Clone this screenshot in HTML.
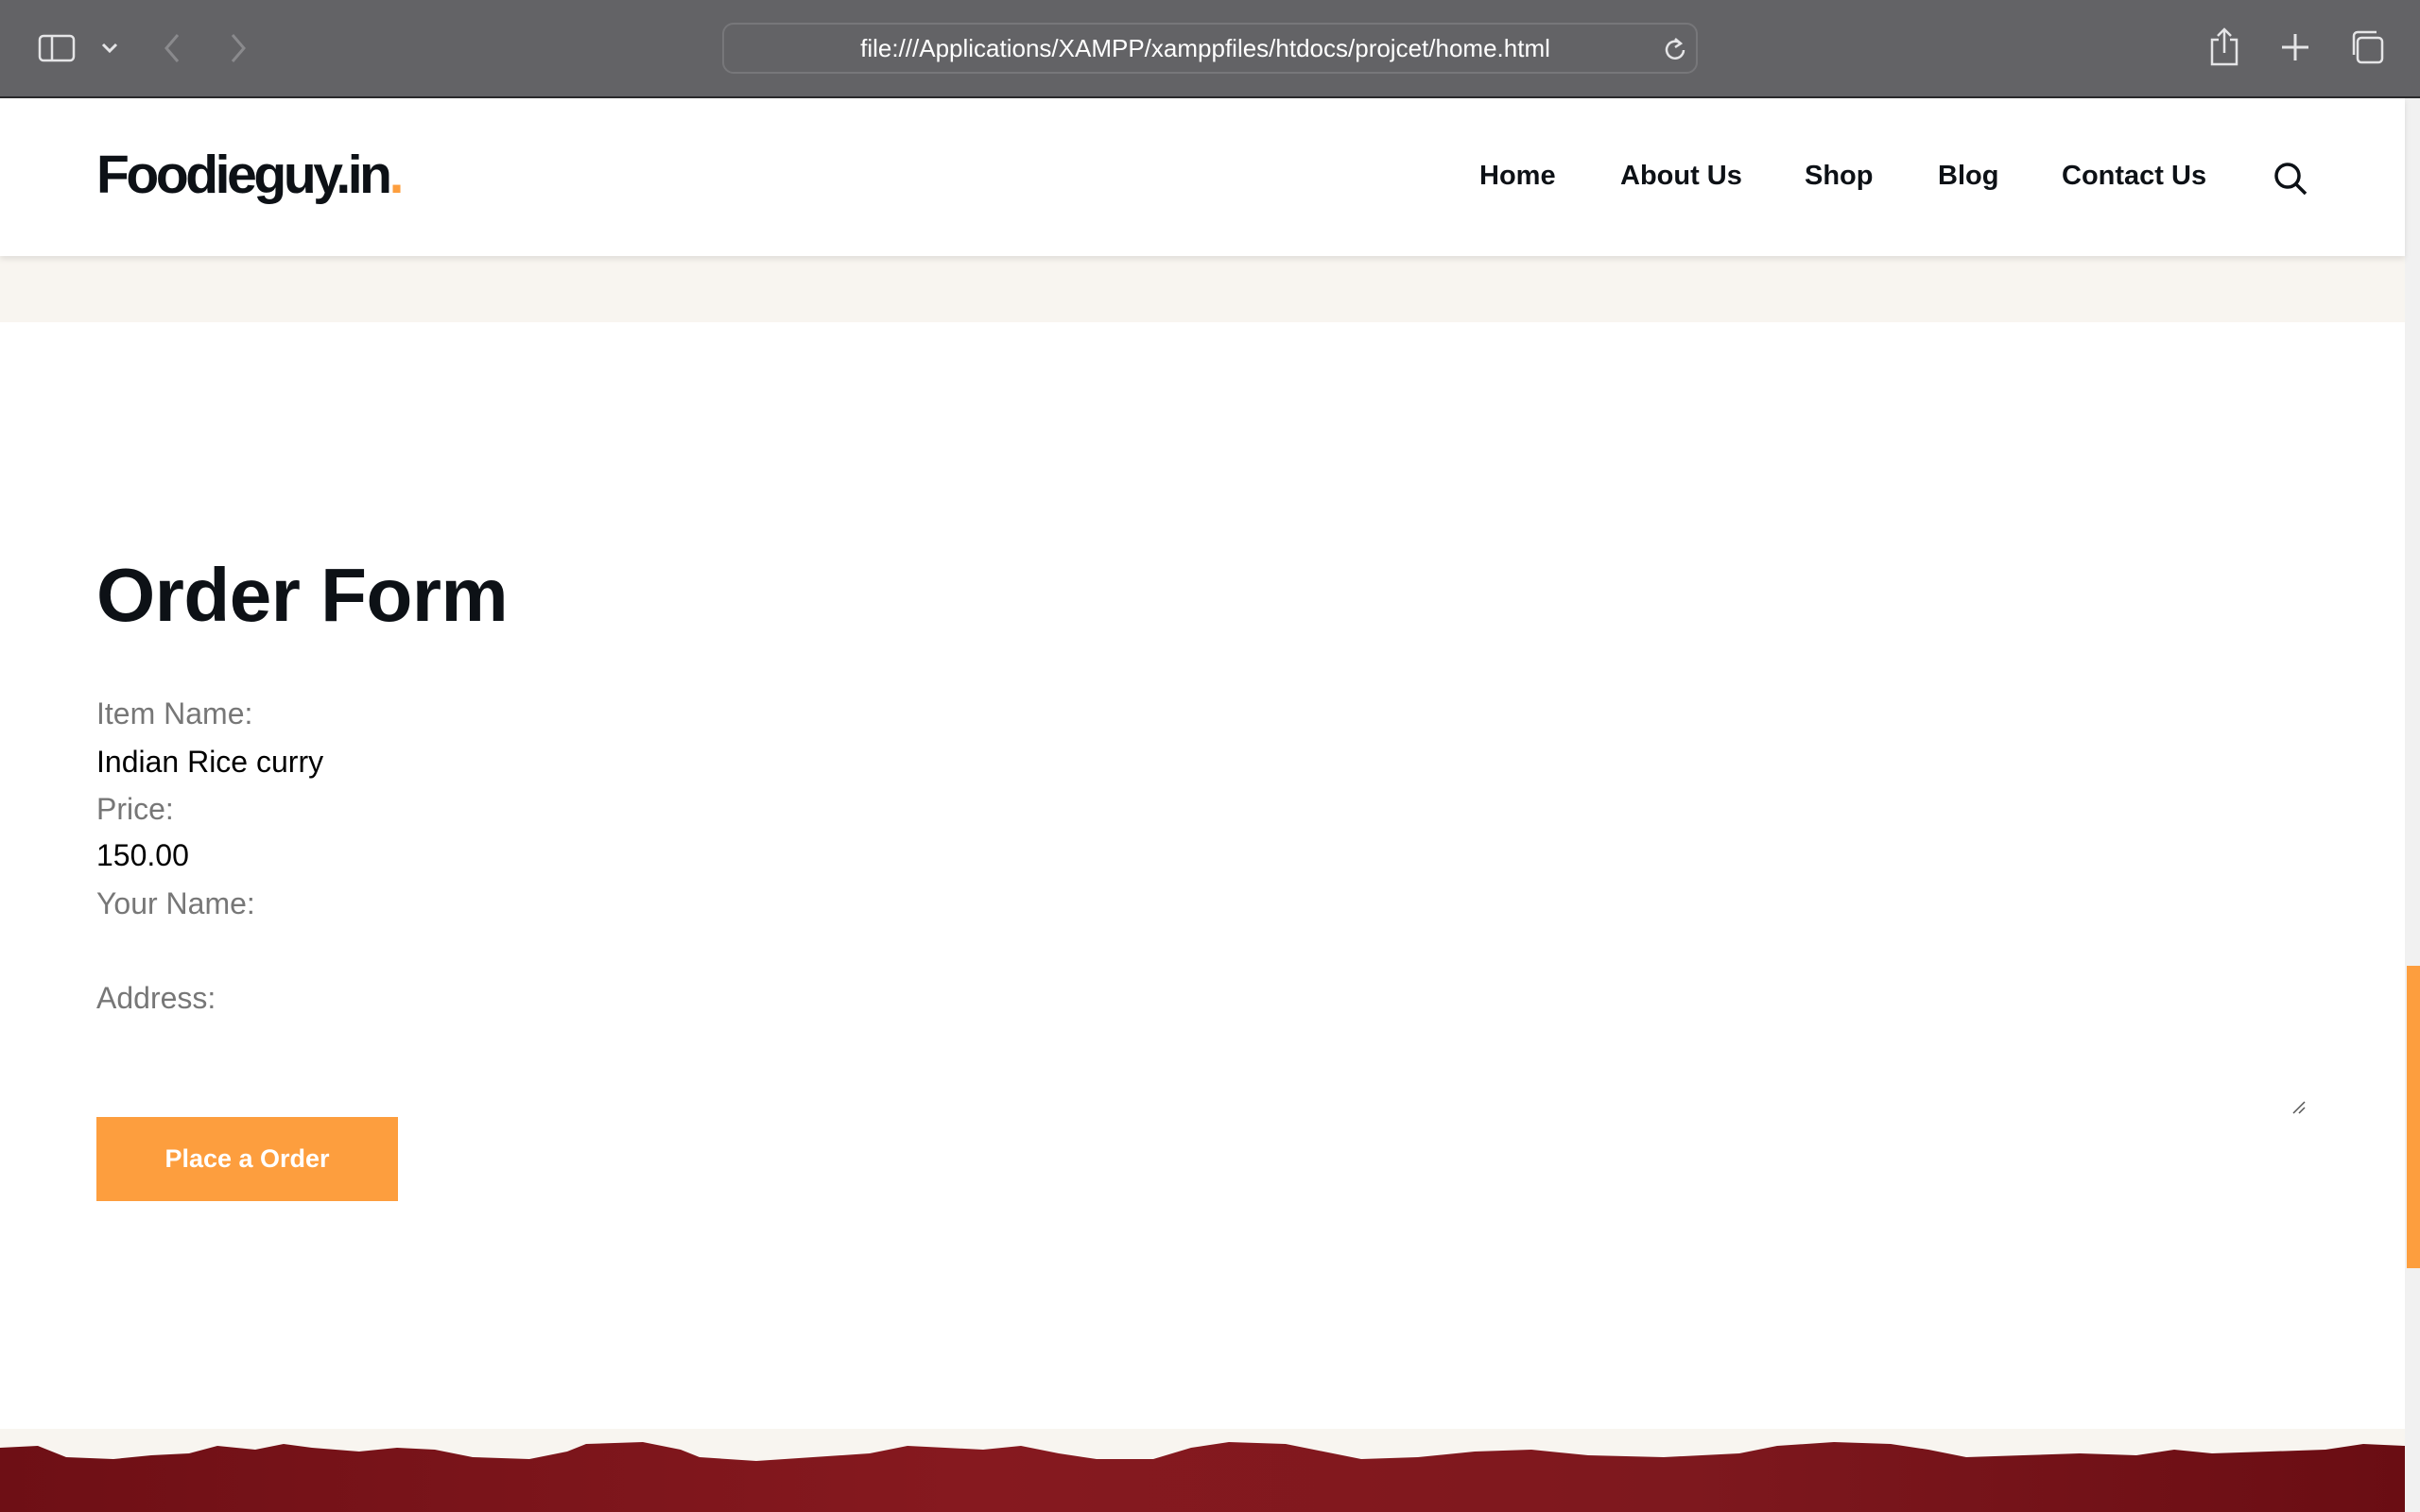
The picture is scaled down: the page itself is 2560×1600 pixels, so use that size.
<!DOCTYPE html>
<html><head><meta charset="utf-8"><style>
*{margin:0;padding:0;box-sizing:border-box}
html,body{width:2560px;height:1600px;overflow:hidden;background:#fff;font-family:"Liberation Sans",sans-serif}
.bar{position:absolute;left:0;top:0;width:2560px;height:104px;background:#636366;border-bottom:2px solid #2a2a2c}
.url{position:absolute;left:764px;top:24px;width:1032px;height:54px;border:2px solid #77777a;border-radius:12px;color:#fff;font-size:26px;line-height:50px;text-align:center;padding-right:50px;padding-left:40px}
.nav{position:absolute;left:0;top:104px;width:2544px;height:167px;background:#fff;box-shadow:0 3px 6px rgba(0,0,0,.1);z-index:2}
.logo{position:absolute;left:102px;top:48px;font-size:57px;font-weight:bold;letter-spacing:-3.4px;color:#0d1116}
.logo span{color:#fd9e3e}
.menu a{position:absolute;top:66px;font-size:29px;font-weight:bold;color:#0d1116;text-decoration:none}
.band{position:absolute;left:0;top:271px;width:2544px;height:70px;background:#f8f5f0}
.sb{position:absolute;right:0;top:104px;width:16px;height:1496px;background:#f1f1f1}
.thumb{position:absolute;right:0;top:1022px;width:14px;height:320px;background:#fd9e3e}
h1{position:absolute;left:102px;top:584px;font-size:80px;font-weight:bold;color:#0d1116;letter-spacing:-0.5px}
.f{position:absolute;left:102px;font-size:32px}
.l{color:#777}
.v{color:#000}
.btn{position:absolute;left:102px;top:1182px;width:319px;height:89px;background:#fd9e3e;color:#fff;font-weight:bold;font-size:27px;text-align:center;line-height:89px}
.foot{position:absolute;left:0;top:1512px;width:2544px;height:88px;background:#f8f5f0}
</style></head><body>
<div class="bar">
<svg style="position:absolute;left:40px;top:36px" width="40" height="30" viewBox="0 0 40 30" fill="none" stroke="#e5e5e7" stroke-width="2.5"><rect x="2" y="2" width="36" height="26" rx="4"/><line x1="15" y1="2" x2="15" y2="28"/></svg>
<svg style="position:absolute;left:106px;top:44px" width="20" height="14" viewBox="0 0 20 14" fill="none" stroke="#e5e5e7" stroke-width="3"><path d="M3 3l7 7 7-7"/></svg>
<svg style="position:absolute;left:172px;top:34px" width="20" height="34" viewBox="0 0 20 34" fill="none" stroke="#8a8a8d" stroke-width="3"><path d="M16 3L4 17l12 14"/></svg>
<svg style="position:absolute;left:242px;top:34px" width="20" height="34" viewBox="0 0 20 34" fill="none" stroke="#8a8a8d" stroke-width="3"><path d="M4 3l12 14L4 31"/></svg>
<div class="url">file:///Applications/XAMPP/xamppfiles/htdocs/projcet/home.html</div>
<svg style="position:absolute;left:1758px;top:38px" width="26" height="28" viewBox="0 0 26 28" fill="none" stroke="#e5e5e7" stroke-width="2.5"><path d="M20 8a9 9 0 1 0 3 7"/><path d="M14 3l6 5-6 4"/></svg>
<svg style="position:absolute;left:2336px;top:28px" width="34" height="42" viewBox="0 0 34 42" fill="none" stroke="#e5e5e7" stroke-width="2.5"><path d="M11 14H4v26h26V14h-7"/><path d="M17 28V3M10 10l7-7 7 7"/></svg>
<svg style="position:absolute;left:2412px;top:34px" width="32" height="32" viewBox="0 0 32 32" stroke="#e5e5e7" stroke-width="3"><path d="M16 2v28M2 16h28"/></svg>
<svg style="position:absolute;left:2484px;top:30px" width="40" height="40" viewBox="0 0 40 40" fill="none" stroke="#e5e5e7" stroke-width="2.5"><rect x="10" y="10" width="26" height="26" rx="4"/><path d="M6 28V8a4 4 0 0 1 4-4h20"/></svg>
</div>
<div class="nav">
<div class="logo">Foodieguy.in<span>.</span></div>
<div class="menu">
<a style="left:1565px">Home</a><a style="left:1714px">About Us</a><a style="left:1909px">Shop</a><a style="left:2050px">Blog</a><a style="left:2181px">Contact Us</a>
</div>
<svg style="position:absolute;left:2404px;top:66px" width="38" height="38" viewBox="0 0 38 38" fill="none" stroke="#0d1116" stroke-width="3.5"><circle cx="16" cy="16" r="12"/><path d="M25 25l10 10"/></svg>
</div>
<div class="band"></div>
<h1>Order Form</h1>
<div class="f l" style="top:737px">Item Name:</div>
<div class="f v" style="top:788px">Indian Rice curry</div>
<div class="f l" style="top:838px">Price:</div>
<div class="f v" style="top:887px">150.00</div>
<div class="f l" style="top:938px">Your Name:</div>
<div class="f l" style="top:1038px">Address:</div>
<svg style="position:absolute;left:2424px;top:1164px" width="16" height="16" viewBox="0 0 16 16" stroke="#555" stroke-width="1.5"><path d="M2 14L14 2M8 14l6-6"/></svg>
<div class="btn">Place a Order</div>
<div class="foot"></div>
<svg style="position:absolute;left:0;top:1520px" width="2544" height="80" viewBox="0 0 2544 80" preserveAspectRatio="none"><defs><linearGradient id="g" x1="0" x2="1" y1="0" y2="0"><stop offset="0" stop-color="#6e0f15"/><stop offset=".4" stop-color="#86191f"/><stop offset=".7" stop-color="#7e181e"/><stop offset="1" stop-color="#6a0d13"/></linearGradient></defs><path fill="url(#g)" d="M0 12 L40 10 L70 22 L120 24 L160 20 L200 18 L230 10 L270 14 L300 8 L330 12 L380 16 L420 12 L460 14 L500 22 L560 24 L600 16 L620 8 L680 6 L720 14 L740 22 L800 26 L860 22 L920 18 L960 10 L1000 12 L1040 14 L1080 10 L1120 18 L1160 24 L1220 24 L1260 12 L1300 6 L1360 8 L1400 16 L1440 24 L1500 22 L1560 16 L1620 14 L1680 20 L1760 22 L1840 18 L1880 10 L1940 6 L2000 8 L2040 14 L2080 22 L2140 20 L2200 18 L2260 20 L2300 14 L2340 18 L2400 16 L2460 14 L2500 8 L2544 10 L2544 80 L0 80Z"/></svg>
<div class="sb"></div>
<div class="thumb"></div>
</body></html>
